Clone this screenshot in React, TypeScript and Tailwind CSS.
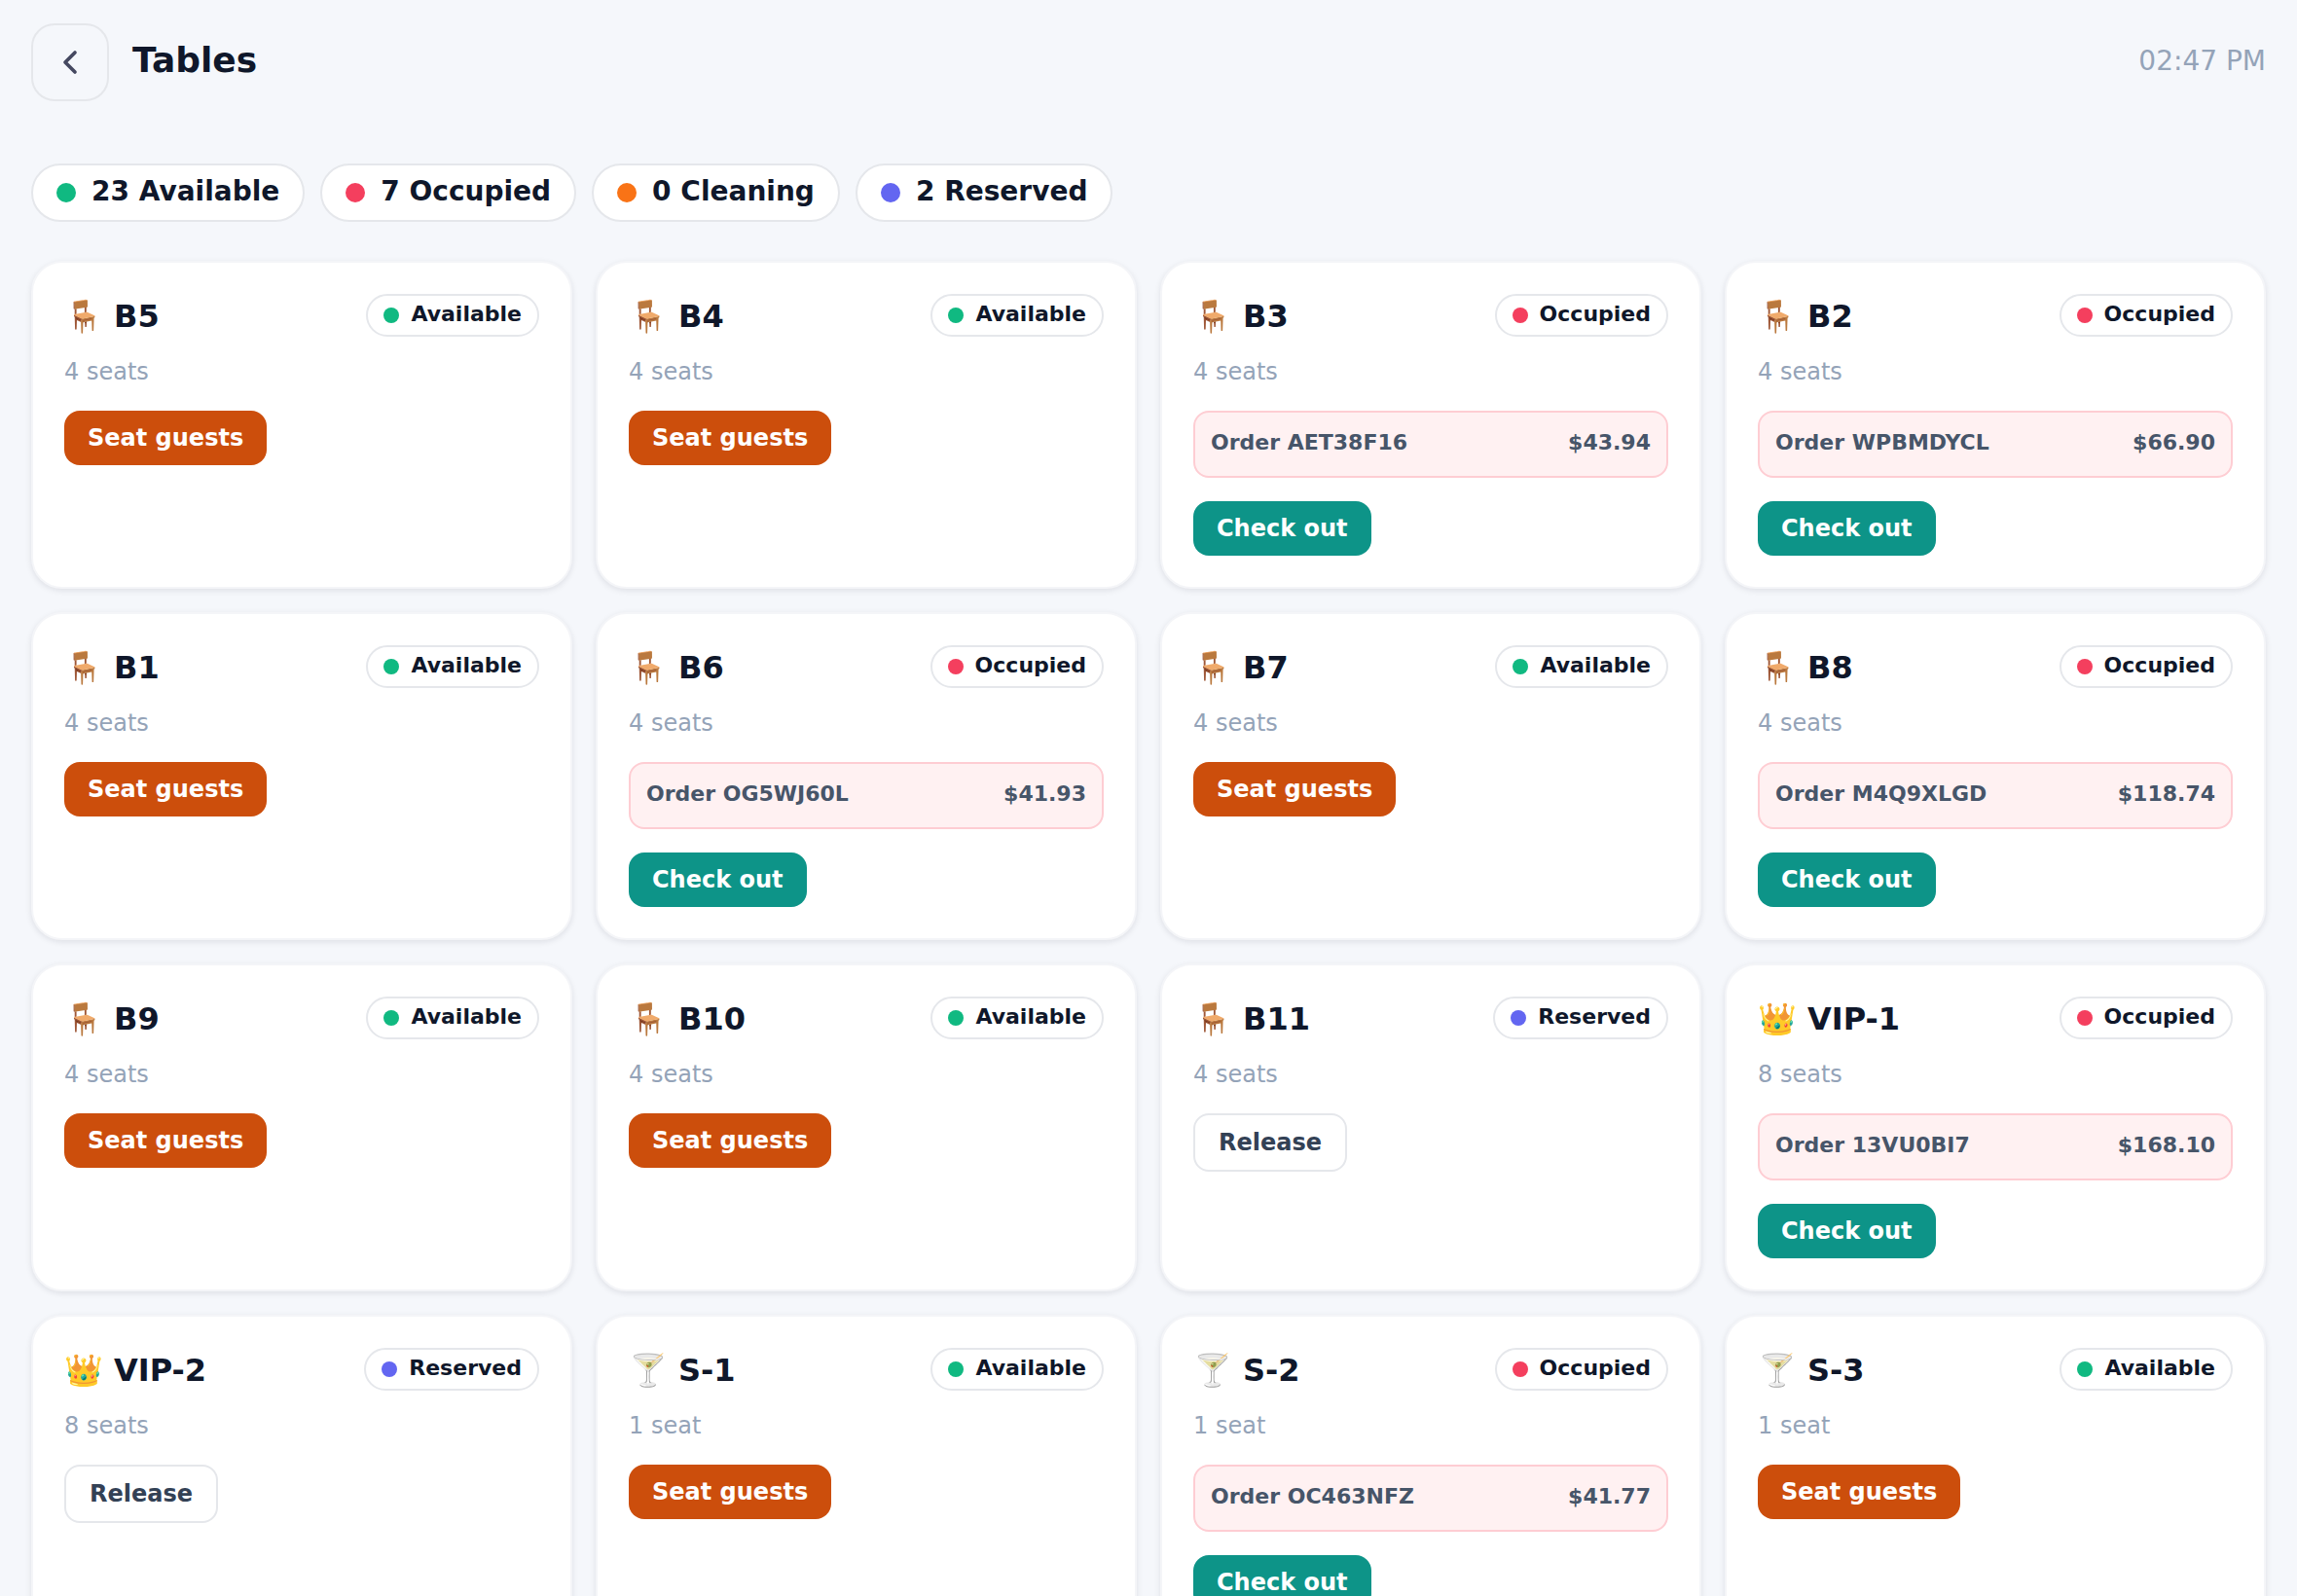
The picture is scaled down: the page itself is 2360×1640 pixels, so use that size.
import { ChevronLeft } from "lucide-react";

type Status = "Available" | "Occupied" | "Cleaning" | "Reserved";

interface DiningTable {
  name: string;
  icon: string;
  seats: number;
  status: Status;
  order?: { code: string; total: string };
}

const CHAIR = "🪑";
const CROWN = "👑";
const COCKTAIL = "🍸";

const dotColors: Record<Status, string> = {
  Available: "bg-[#10b981]",
  Occupied: "bg-[#f43f5e]",
  Cleaning: "bg-[#f97316]",
  Reserved: "bg-[#6366f1]",
};

const summary: { status: Status; count: number }[] = [
  { status: "Available", count: 23 },
  { status: "Occupied", count: 7 },
  { status: "Cleaning", count: 0 },
  { status: "Reserved", count: 2 },
];

const tables: DiningTable[] = [
  { name: "B5", icon: CHAIR, seats: 4, status: "Available" },
  { name: "B4", icon: CHAIR, seats: 4, status: "Available" },
  { name: "B3", icon: CHAIR, seats: 4, status: "Occupied", order: { code: "AET38F16", total: "$43.94" } },
  { name: "B2", icon: CHAIR, seats: 4, status: "Occupied", order: { code: "WPBMDYCL", total: "$66.90" } },
  { name: "B1", icon: CHAIR, seats: 4, status: "Available" },
  { name: "B6", icon: CHAIR, seats: 4, status: "Occupied", order: { code: "OG5WJ60L", total: "$41.93" } },
  { name: "B7", icon: CHAIR, seats: 4, status: "Available" },
  { name: "B8", icon: CHAIR, seats: 4, status: "Occupied", order: { code: "M4Q9XLGD", total: "$118.74" } },
  { name: "B9", icon: CHAIR, seats: 4, status: "Available" },
  { name: "B10", icon: CHAIR, seats: 4, status: "Available" },
  { name: "B11", icon: CHAIR, seats: 4, status: "Reserved" },
  { name: "VIP-1", icon: CROWN, seats: 8, status: "Occupied", order: { code: "13VU0BI7", total: "$168.10" } },
  { name: "VIP-2", icon: CROWN, seats: 8, status: "Reserved" },
  { name: "S-1", icon: COCKTAIL, seats: 1, status: "Available" },
  { name: "S-2", icon: COCKTAIL, seats: 1, status: "Occupied", order: { code: "OC463NFZ", total: "$41.77" } },
  { name: "S-3", icon: COCKTAIL, seats: 1, status: "Available" },
];

function SummaryChip({ status, count }: { status: Status; count: number }) {
  return (
    <li className="flex items-center gap-4 rounded-full border-2 border-[#e5e7eb] bg-white px-6 py-2.5">
      <span className={`size-5 rounded-full ${dotColors[status]}`} />
      <span className="pb-0.5 text-[28px] leading-[34px] font-bold">
        {count} {status}
      </span>
    </li>
  );
}

function StatusBadge({ status }: { status: Status }) {
  return (
    <span className="flex items-center gap-3 rounded-full border-2 border-[#e5e7eb] bg-white px-4 py-1">
      <span className={`size-4 rounded-full ${dotColors[status]}`} />
      <span className="pb-0.5 text-[22px] leading-[30px] font-bold">{status}</span>
    </span>
  );
}

function TableAction({ status }: { status: Status }) {
  if (status === "Reserved") {
    return (
      <button
        type="button"
        className="rounded-2xl border-2 border-[#e5e7eb] bg-white px-6 py-3 text-2xl leading-8 font-bold text-[#334155]"
      >
        Release
      </button>
    );
  }
  if (status === "Occupied") {
    return (
      <button type="button" className="rounded-2xl bg-[#0d9488] px-6 py-3 text-2xl leading-8 font-bold text-white">
        Check out
      </button>
    );
  }
  return (
    <button type="button" className="rounded-2xl bg-[#cc4e0c] px-6 py-3 text-2xl leading-8 font-bold text-white">
      Seat guests
    </button>
  );
}

function TableCard({ table }: { table: DiningTable }) {
  return (
    <article className="flex flex-col items-start rounded-[32px] border-2 border-[#f4f5f8] bg-white p-8 shadow-[0_2px_6px_rgba(15,23,42,0.10)]">
      <div className="flex w-full items-center justify-between">
        <h2 className="pt-0.5 text-[32px] leading-10 font-bold whitespace-nowrap">
          {table.icon} {table.name}
        </h2>
        <StatusBadge status={table.status} />
      </div>
      <p className="mt-[18px] mb-[22px] text-2xl leading-9 text-[#94a3b8]">
        {table.seats} {table.seats === 1 ? "seat" : "seats"}
      </p>
      {table.order && (
        <div className="mb-6 flex w-full justify-between rounded-2xl border-2 border-[#fecdd3] bg-[#fff1f2] px-4 pt-[17px] pb-5 text-[22px] leading-7 font-bold text-[#475569]">
          <span>Order {table.order.code}</span>
          <span>{table.order.total}</span>
        </div>
      )}
      <TableAction status={table.status} />
    </article>
  );
}

export default function App() {
  return (
    <div className="h-screen overflow-y-auto bg-[#f5f7fb] px-8 py-6 font-['DejaVu_Sans','Noto_Color_Emoji',sans-serif] text-[#0f172a] [scrollbar-width:none]">
      <header className="flex items-center gap-6">
        <button
          type="button"
          aria-label="Back"
          className="flex size-20 items-center justify-center rounded-3xl border-2 border-[#e5e7eb] text-[#454860]"
        >
          <ChevronLeft className="size-10" strokeWidth={2.2} />
        </button>
        <h1 className="pb-1 text-4xl leading-11 font-bold">Tables</h1>
        <time className="ml-auto pb-0.5 text-[28px] leading-8 text-[#94a3b8]">02:47 PM</time>
      </header>
      <main>
        <ul className="mt-16 flex flex-wrap gap-4">
          {summary.map((item) => (
            <SummaryChip key={item.status} status={item.status} count={item.count} />
          ))}
        </ul>
        <section aria-label="Table list" className="mt-10 grid grid-cols-4 gap-6">
          {tables.map((table) => (
            <TableCard key={table.name} table={table} />
          ))}
        </section>
      </main>
    </div>
  );
}
